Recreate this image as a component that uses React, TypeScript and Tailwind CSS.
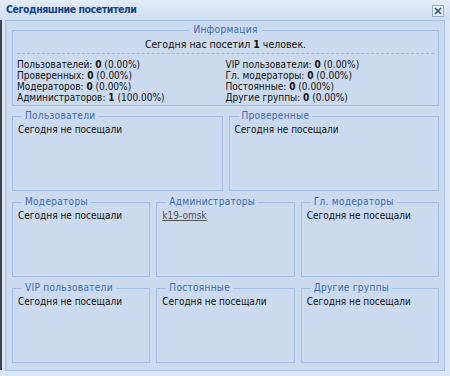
import React from 'react';

const leftStats = [
  { label: 'Пользователей', count: 0, pct: '0.00%' },
  { label: 'Проверенных', count: 0, pct: '0.00%' },
  { label: 'Модераторов', count: 0, pct: '0.00%' },
  { label: 'Администраторов', count: 1, pct: '100.00%' },
];

const rightStats = [
  { label: 'VIP пользователи', count: 0, pct: '0.00%' },
  { label: 'Гл. модераторы', count: 0, pct: '0.00%' },
  { label: 'Постоянные', count: 0, pct: '0.00%' },
  { label: 'Другие группы', count: 0, pct: '0.00%' },
];

type Stat = { label: string; count: number; pct: string };

const StatList = ({ items }: { items: Stat[] }) => (
  <div className="flex flex-col">
    {items.map(s => (
      <div key={s.label} className="h-[11px] leading-[11px] whitespace-nowrap">
        {s.label}: <b>{s.count}</b> ({s.pct})
      </div>
    ))}
  </div>
);

const Group = ({ title, children }: { title: string; children?: React.ReactNode }) => (
  <fieldset className="h-[81px] border border-[#a5bfe6] px-[5px] min-w-0">
    <legend className="ml-[4px] px-[3px] text-[10px] leading-[12px] tracking-[0.3px] text-[#3d68b0]">
      {title}
    </legend>
    <div className="pt-[1px] leading-[13px]">{children ?? 'Сегодня не посещали'}</div>
  </fieldset>
);

export default function App() {
  return (
    <div className="w-[450px] h-[376px] flex flex-col bg-[#dce7f5] text-[10px] text-[#111] font-['DejaVu_Sans_Condensed','DejaVu_Sans',sans-serif]">
      <div className="h-[20px] shrink-0 flex items-center justify-between pl-[6px] pr-[6px] bg-gradient-to-b from-[#e3ecf8] to-[#cfddf0]">
        <span className="font-bold text-[#15428b] text-[10.5px] tracking-[-0.45px]">Сегодняшние посетители</span>
        <button className="w-[12px] h-[12px] mt-[1px] border border-[#8eaedb] bg-[#eef3fb] flex items-center justify-center">
          <svg width="8" height="8" viewBox="0 0 8 8">
            <path d="M1 1L7 7M7 1L1 7" stroke="#2a4f8f" strokeWidth="1.6" />
          </svg>
        </button>
      </div>
      <div className="flex-1 flex min-h-0">
        <div className="w-[2px] bg-[#3b424e] mb-[6px]" />
        <div className="flex-1 pl-[3px] pr-[5px] pb-[5px]">
          <div className="h-full border border-[#a9c1e5] bg-[#cbdaee] pl-[6px] pr-[5px] pt-[3px] flex flex-col gap-[5px]">
            <fieldset className="border border-[#a5bfe6] px-[4px] pb-[2px] min-w-0 mb-[-1px]">
              <legend className="mx-auto px-[4px] text-[10px] leading-[12px] tracking-[0.3px] text-[#3d68b0]">
                Информация
              </legend>
              <div className="text-center text-[10.5px] leading-[13px] mt-[2px]">
                Сегодня нас посетил <b>1</b> человек.
              </div>
              <div className="border-t border-dashed border-[#9fb8df] mt-[2px] mb-[5px]" />
              <div className="grid grid-cols-2">
                <StatList items={leftStats} />
                <StatList items={rightStats} />
              </div>
            </fieldset>
            <div className="grid grid-cols-2 gap-[6px]">
              <Group title="Пользователи" />
              <Group title="Проверенные" />
            </div>
            <div className="grid grid-cols-3 gap-[6px]">
              <Group title="Модераторы" />
              <Group title="Администраторы">
                <a href="#" className="underline text-[#555]">k19-omsk</a>
              </Group>
              <Group title="Гл. модераторы" />
            </div>
            <div className="grid grid-cols-3 gap-[6px]">
              <Group title="VIP пользователи" />
              <Group title="Постоянные" />
              <Group title="Другие группы" />
            </div>
          </div>
        </div>
      </div>
    </div>
  );
}
